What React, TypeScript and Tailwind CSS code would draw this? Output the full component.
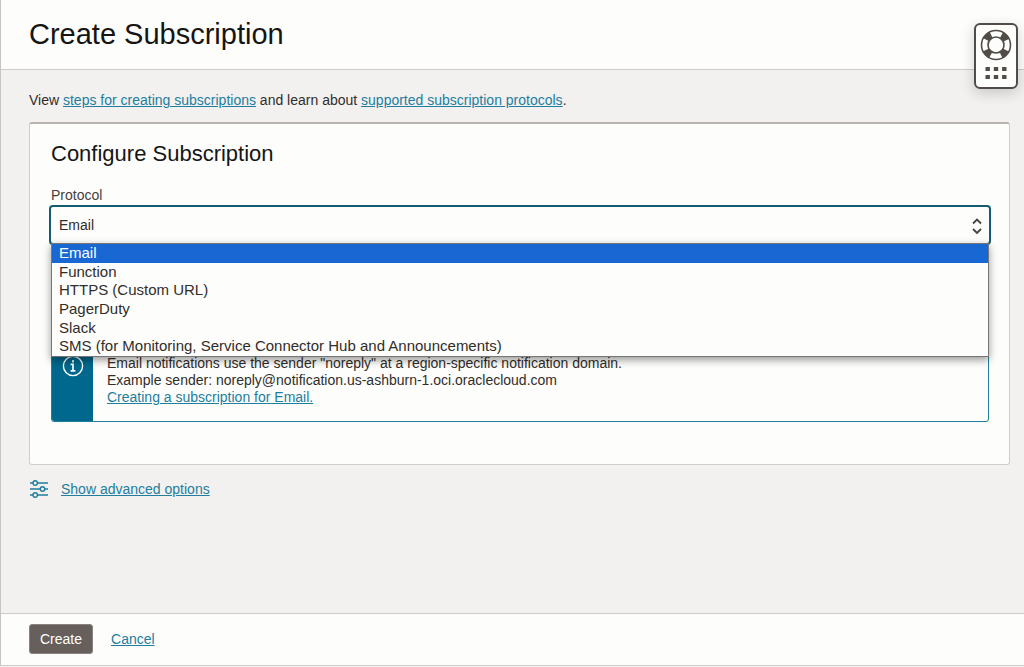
import React, { useState } from "react";

const protocols = [
  "Email",
  "Function",
  "HTTPS (Custom URL)",
  "PagerDuty",
  "Slack",
  "SMS (for Monitoring, Service Connector Hub and Announcements)",
];

const link = "text-[#227e9e] underline";

function HelpButton() {
  return (
    <button
      aria-label="Help"
      className="absolute top-[23px] right-[6px] flex h-[66px] w-11 flex-col items-center gap-1 rounded-md border-2 border-[#514c47] bg-[#fdfdfb] pt-[3px] shadow-[0_4px_14px_rgba(0,0,0,0.18)]"
    >
      <svg width="34" height="34" viewBox="0 0 34 34" fill="none">
        <circle cx="17" cy="17" r="11.3" stroke="#514c47" strokeWidth="7" strokeDasharray="7 10.75" strokeDashoffset="-5.375" />
        <circle cx="17" cy="17" r="14.5" stroke="#514c47" strokeWidth="1.6" />
        <circle cx="17" cy="17" r="8" stroke="#514c47" strokeWidth="1.6" />
      </svg>
      <svg width="22" height="14" viewBox="0 0 22 14" fill="#514c47">
        <path d="M0.5 1h4.4v4h-4.4zM8.8 1h4.4v4h-4.4zM17.1 1h4.4v4h-4.4zM0.5 9h4.4v4h-4.4zM8.8 9h4.4v4h-4.4zM17.1 9h4.4v4h-4.4z" />
      </svg>
    </button>
  );
}

function ProtocolSelect() {
  const [open, setOpen] = useState(true);
  const [value, setValue] = useState(protocols[0]);

  return (
    <div>
      <label htmlFor="protocol" className="block text-sm leading-5 text-[#45413e]">
        Protocol
      </label>
      <div className="relative -mx-0.5">
        <select
          id="protocol"
          value={value}
          onChange={(e) => setValue(e.target.value)}
          onMouseDown={(e) => {
            e.preventDefault();
            setOpen(!open);
          }}
          className="block h-10 w-full appearance-none rounded border-2 border-[#145c72] bg-[#fdfdfb] px-2 text-sm text-[#312d2a] outline-none"
        >
          {protocols.map((p) => (
            <option key={p}>{p}</option>
          ))}
        </select>
        <svg
          className="pointer-events-none absolute top-3 right-2 h-[18px] w-3"
          viewBox="0 0 12 18"
          fill="none"
          stroke="#45413e"
          strokeWidth="1.8"
        >
          <path d="M2 6.5l4-4 4 4M2 12l4 4 4-4" />
        </svg>
        {open && (
          <ul
            role="listbox"
            aria-label="Protocol"
            className="absolute inset-x-0.5 top-[38px] z-10 grid h-[114px] border border-[#767676] bg-[#fdfdfb] text-[15px] leading-[18px] text-[#312d2a] shadow-[0_3px_8px_rgba(0,0,0,0.4)]"
          >
            {protocols.map((p) => (
              <li
                key={p}
                role="option"
                aria-selected={p === value}
                onClick={() => {
                  setValue(p);
                  setOpen(false);
                }}
                className={p === value ? "bg-[#1967d2] px-[7px] text-white" : "px-[7px]"}
              >
                {p}
              </li>
            ))}
          </ul>
        )}
      </div>
    </div>
  );
}

export default function App() {
  return (
    <div className="min-h-screen bg-[#f3f1f0] pb-px">
      <div className="relative flex min-h-[calc(100vh-1px)] flex-col border-l border-[#c9c4c0] bg-[#f3f1f0] font-['Liberation_Sans',Arial,sans-serif] text-sm text-[#312d2a]">
        <header className="border-b border-[#cfcbc8] bg-[#fdfdfb] px-7 pt-4 pb-[17px]">
          <h1 className="text-[29px] leading-9 text-[#161513]">Create Subscription</h1>
        </header>
        <HelpButton />

        <main className="flex-1 pt-5 pr-3.5 pl-7">
          <p className="leading-5">
            View{" "}
            <a href="#steps" className={link}>
              steps for creating subscriptions
            </a>{" "}
            and learn about{" "}
            <a href="#protocols" className={link}>
              supported subscription protocols
            </a>
            .
          </p>

          <section className="mt-3 rounded-[3px] border border-t-2 border-[#d1ccc9] border-t-[#bab4af] bg-[#fdfdfb] pt-4 pr-5 pb-[42px] pl-[21px]">
            <h2 className="mb-[17px] text-[22px] leading-7 text-[#161513]">Configure Subscription</h2>
            <ProtocolSelect />
            <div className="mt-[97px] flex overflow-hidden rounded-[3px] border border-[#227e9e]">
              <div className="flex w-[41px] justify-center bg-[#00688c] pt-3">
                <svg width="22" height="22" viewBox="0 0 22 22" fill="none">
                  <circle cx="11" cy="11" r="9.6" stroke="#fff" strokeWidth="1.4" />
                  <path d="M11 5v2.4M8.6 9.4H11v6.4M8.6 15.8h4.8" stroke="#fff" strokeWidth="1.7" />
                </svg>
              </div>
              <div className="px-3.5 pt-3 pb-[15px] leading-[17px]">
                <p>Email notifications use the sender "noreply" at a region-specific notification domain.</p>
                <p>Example sender: noreply@notification.us-ashburn-1.oci.oraclecloud.com</p>
                <a href="#email" className={link}>
                  Creating a subscription for Email.
                </a>
              </div>
            </div>
          </section>

          <div className="mt-3.5 flex items-center gap-3">
            <svg width="20" height="20" viewBox="0 0 20 20" fill="none" stroke="#227e9e" strokeWidth="1.4">
              <path d="M1 4h3M8.5 4H19M1 10h10M16 10h3M1 16h3M8.5 16H19" />
              <circle cx="6.2" cy="4" r="2.2" />
              <circle cx="13.5" cy="10" r="2.2" />
              <circle cx="6.2" cy="16" r="2.2" />
            </svg>
            <a href="#advanced" className={link}>
              Show advanced options
            </a>
          </div>
        </main>

        <footer className="flex items-center gap-[18px] border-y border-[#cfcbc8] bg-[#fdfdfb] px-7 pt-2.5 pb-[11px]">
          <button className="rounded-[3px] border border-[#8a827e] bg-[#665f5b] px-2.5 py-1 leading-5 text-white">
            Create
          </button>
          <a href="#cancel" className={link}>
            Cancel
          </a>
        </footer>
      </div>
    </div>
  );
}
